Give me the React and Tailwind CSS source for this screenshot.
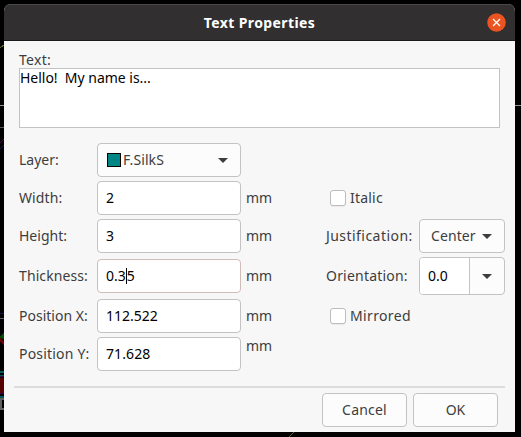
import React from "react";

function Caret() {
  return (
    <svg width="10" height="5" viewBox="0 0 10 5" className="shrink-0">
      <path d="M0 0H10L5 5Z" fill="#3d3d3d" />
    </svg>
  );
}

function Label({ children, className = "" }) {
  return <span className={`whitespace-pre ${className}`}>{children}</span>;
}

function Field({ label, value, unit, labelClass = "", valueClass = "", rowClass = "", unitClass = "", focused }) {
  return (
    <div className={`flex h-[34px] items-center ${rowClass}`}>
      <div className="w-[78px] shrink-0">
        <Label className={labelClass}>{label}</Label>
      </div>
      <div
        className={`flex h-[34px] w-[144px] items-center rounded-[4px] border bg-white pl-2 text-black ${
          focused ? "border-[#d0bdb8]" : "border-[#c3c3c3]"
        }`}
      >
        <Label className={valueClass}>{value}</Label>
      </div>
      <Label className={`ml-[5px] ${unitClass}`}>{unit}</Label>
    </div>
  );
}

function Check({ label, className = "", labelClass = "" }) {
  return (
    <div className={`flex h-[34px] items-center pl-1 ${className}`}>
      <span className="mr-1 size-4 rounded-[3px] border border-[#bdbdbd] bg-white shadow-[0_1px_1px_rgba(0,0,0,0.06)]" />
      <Label className={labelClass}>{label}</Label>
    </div>
  );
}

function Button({ children, className = "" }) {
  return (
    <button className={`flex h-[34px] w-[85px] items-center justify-center rounded-[4px] border border-[#c3c3c3] bg-[#fcfcfc] ${className}`}>
      {children}
    </button>
  );
}

function Board() {
  return (
    <svg width="521" height="437" className="absolute inset-0" shapeRendering="crispEdges">
      <rect width="521" height="437" fill="#000" />
      <path d="M0 47.500L4 45" stroke="#65651b" fill="none" />
      <path d="M0 105.500H4M515 105.500H521" stroke="#929292" />
      <path d="M0 127.500H4" stroke="#555" />
      <path d="M0 143L4 139" stroke="#5a0050" />
      <path d="M0 149L4 145" stroke="#16165c" />
      <path d="M0 313.500H4" stroke="#16104c" />
      <path d="M0 318.500H4" stroke="#695c70" />
      <path d="M0 336L4 332V339L0 338Z" fill="#004b00" />
      <path d="M0 338L4 342V346L0 341Z" fill="#650000" />
      <path d="M0 372H4M0 375.500H4M0 396.500H4" stroke="#00585a" strokeWidth="2" />
      <rect y="378" width="4" height="15" fill="#560000" />
      <path d="M0 376.500H4M0 393.500H4" stroke="#3c0055" />
      <path d="M4 398.500H0.500V408.500H4" stroke="#606060" strokeWidth="2" fill="none" />
      <path d="M289 437L294 432" stroke="#65651b" />
    </svg>
  );
}

export default function App() {
  return (
    <div className="relative h-[437px] w-[521px] overflow-hidden bg-black pt-1 pl-1 font-['Noto_Sans',sans-serif] text-[14px] leading-5 text-[#3d3d3d]">
      <Board />
      <main className="relative flex h-[428px] w-[511px] flex-col overflow-hidden rounded-t-[7px] bg-[#f7f7f7]">
        <header className="grid h-[37px] shrink-0 grid-cols-[1fr_auto_1fr] items-center border-t border-b border-t-[#4b4949] border-b-[#1c1b1b] bg-[#322f30] px-[9px] text-white">
          <span />
          <Label className="font-bold tracking-[0.4px]">Text Properties</Label>
          <svg width="19" height="19" viewBox="0 0 19 19" className="-mt-px justify-self-end">
            <circle cx="9.500" cy="9.500" r="9.300" fill="#e95420" />
            <path d="M6 6L13 13M13 6L6 13" stroke="#fff" strokeWidth="1.300" />
          </svg>
        </header>

        <section className="h-[87px] shrink-0 px-[15px] pt-[9px]">
          <div className="h-[18px]">
            <Label className="tracking-[0.3px]">Text:</Label>
          </div>
          <div className="h-[60px] w-[481px] border border-[#c3c3c3] bg-white text-black">
            <Label className="block leading-[18px] tracking-[-0.02px]">{"Hello!  My name is..."}</Label>
          </div>
        </section>

        <section className="flex h-[258px] shrink-0 pl-[15px] pt-[15px]">
          <div className="w-[307px]">
            <div className="mb-1 flex h-[34px] items-center">
              <div className="w-[78px]">
                <Label>Layer:</Label>
              </div>
              <div className="flex h-[34px] w-[144px] items-center rounded-[4px] border border-[#c3c3c3] bg-[#fcfcfc] pr-3 pl-[9px]">
                <span className="mr-0.5 size-[14px] border border-black bg-[#008585]" />
                <Label className="grow tracking-[0.1px]">F.SilkS</Label>
                <Caret />
              </div>
            </div>
            <Field label="Width:" value="2" unit="mm" rowClass="mb-1" labelClass="tracking-[0.1px]" />
            <Field label="Height:" value="3" unit="mm" rowClass="mb-1.5" />
            <Field
              label="Thickness:"
              labelClass="tracking-[0.1px]"
              value={<>0.3<span className="inline-block h-4 w-px bg-black align-[-3px]" />5</>}
              unit="mm"
              rowClass="mb-1.5"
              focused
            />
            <Field label="Position X:" value="112.522" unit="mm" rowClass="mb-1" />
            <Field label="Position Y:" value="71.628" unit="mm" labelClass="tracking-[0.2px]" valueClass="tracking-[0.1px]" unitClass="-mt-4" />
          </div>

          <div className="w-[179px] pt-[38px]">
            <Check label="Italic" className="mb-1" labelClass="tracking-[0.2px]" />
            <div className="mb-1 flex h-[34px] items-center">
              <div className="w-[93px]">
                <Label className="tracking-[0.45px]">Justification:</Label>
              </div>
              <div className="flex h-[34px] w-[86px] items-center justify-between rounded-[4px] border border-[#c3c3c3] bg-[#fcfcfc] pr-3 pl-[11px]">
                <Label className="tracking-[0.1px]">Center</Label>
                <Caret />
              </div>
            </div>
            <div className="mb-1 flex h-[38px] items-center">
              <div className="w-[93px]">
                <Label className="tracking-[0.2px]">Orientation:</Label>
              </div>
              <div className="flex h-[38px] w-[86px] overflow-hidden rounded-[4px] border border-[#c3c3c3] bg-[#fcfcfc]">
                <div className="flex w-[50px] items-center border-r border-[#c3c3c3] bg-white pl-2 text-black">
                  <Label>0.0</Label>
                </div>
                <div className="flex grow items-center justify-center">
                  <Caret />
                </div>
              </div>
            </div>
            <Check label="Mirrored" labelClass="tracking-[0.35px]" />
          </div>
        </section>

        <footer className="mx-[10px] h-[46px] w-[491px] border-t-2 border-[#dcdcdc]">
          <div className="flex justify-end gap-1.5 pt-[5px] pr-[7px]">
            <Button className="tracking-[0.2px]">Cancel</Button>
            <Button>OK</Button>
          </div>
        </footer>
      </main>
    </div>
  );
}
